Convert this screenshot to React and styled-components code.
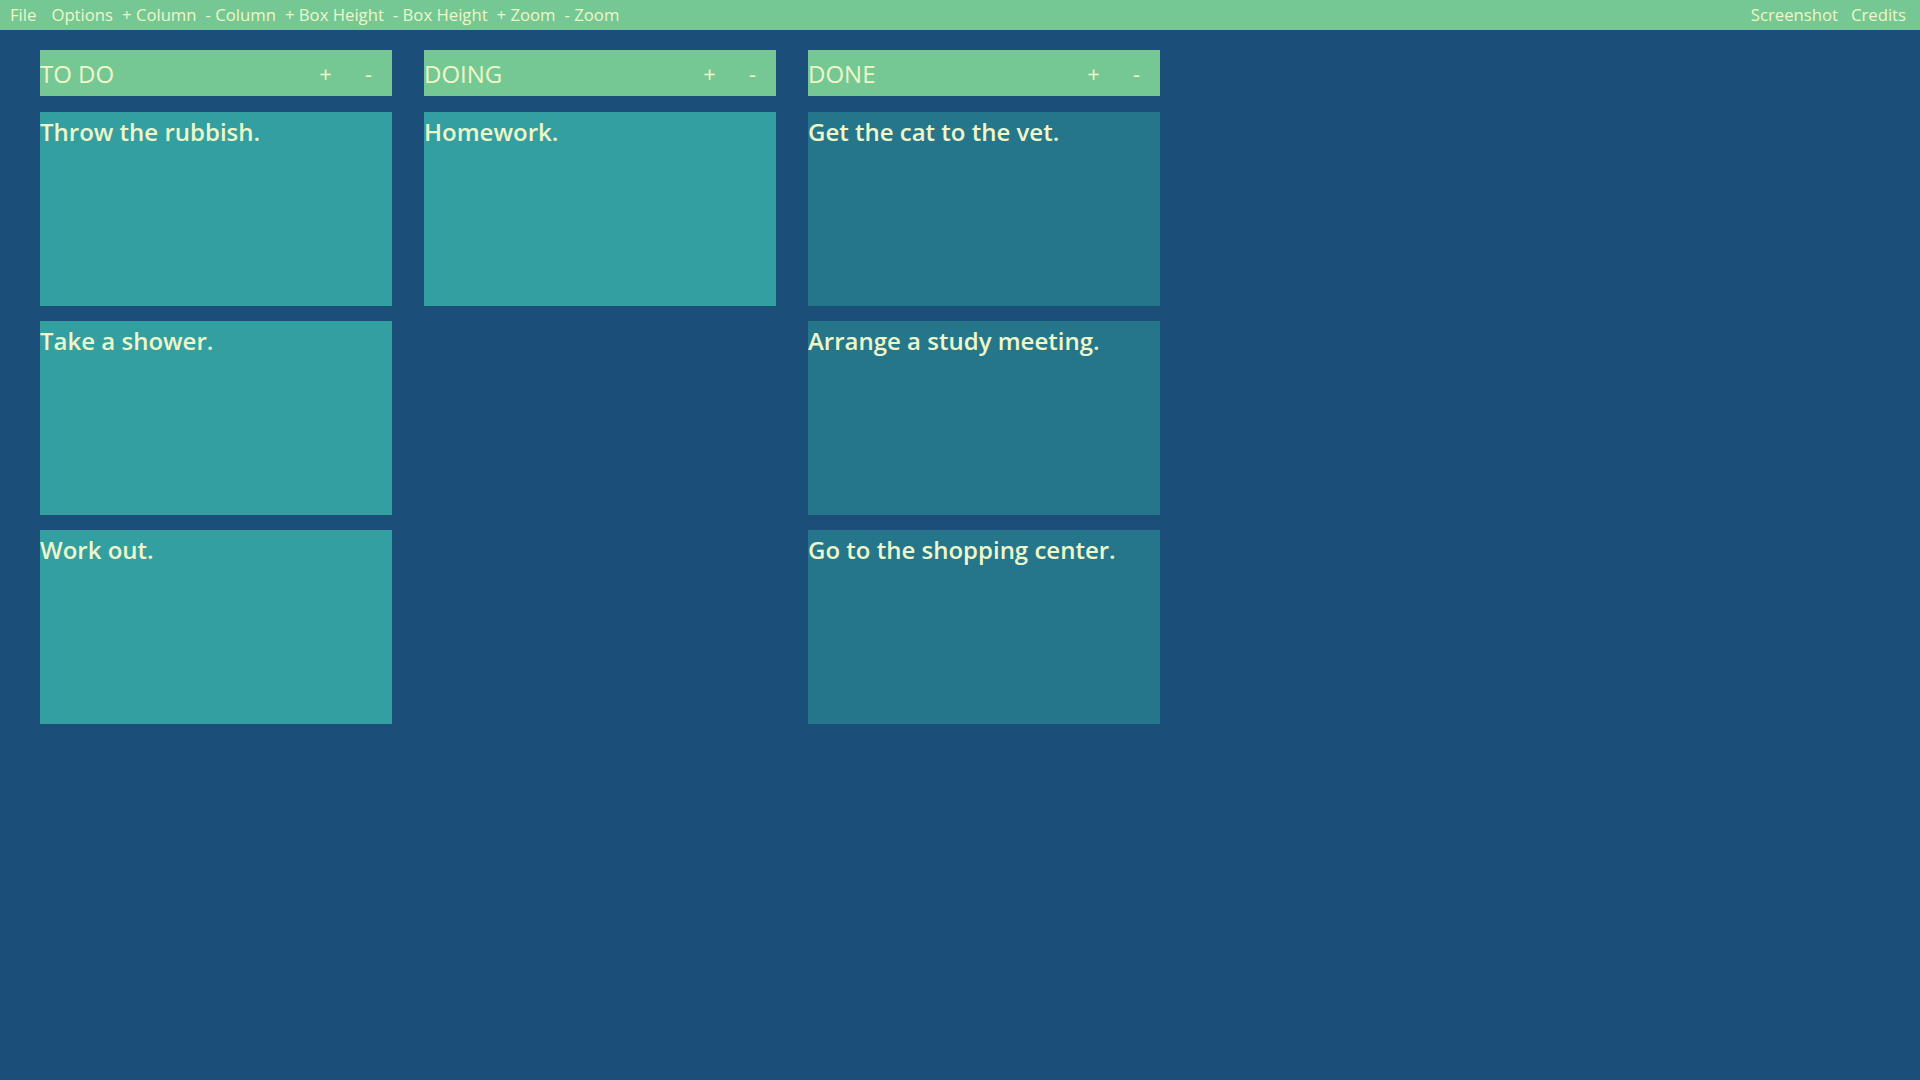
import React from "react";
import styled, { createGlobalStyle } from "styled-components";

const GlobalStyle = createGlobalStyle`
  html, body {
    margin: 0;
    padding: 0;
    background: #1b4e78;
    font-family: "Open Sans", "Noto Sans", sans-serif;
  }
`;

const Page = styled.div`
  min-height: 100vh;
  background: #1b4e78;
`;

const MenuBar = styled.div`
  height: 30px;
  background: #75c893;
  display: flex;
  align-items: center;
  justify-content: space-between;
  padding: 0 14px 0 10px;
`;

const MenuGroup = styled.div`
  display: flex;
  align-items: center;
  gap: ${(p) => p.gap || 10}px;
`;

const MenuItem = styled.span`
  color: #eef7c9;
  font-size: 16.7px;
  line-height: 30px;
  white-space: nowrap;
  cursor: pointer;
`;

const FileItem = styled(MenuItem)`
  margin-right: 6px;
`;

const Board = styled.div`
  display: flex;
  align-items: flex-start;
  gap: 32px;
  padding: 20px 40px;
`;

const Column = styled.div`
  width: 352px;
  display: flex;
  flex-direction: column;
`;

const Header = styled.div`
  height: 46px;
  background: #75c893;
  display: flex;
  align-items: center;
  margin-bottom: 16px;
`;

const Title = styled.span`
  flex: 1;
  color: #eef7c9;
  font-size: 24px;
`;

const HeaderButton = styled.span`
  width: 43px;
  text-align: center;
  color: #eef7c9;
  font-size: 22px;
  cursor: pointer;
`;

const ButtonPad = styled.span`
  width: 2px;
`;

const Cards = styled.div`
  display: flex;
  flex-direction: column;
  gap: 15px;
`;

const Card = styled.div`
  height: 194px;
  box-sizing: border-box;
  background: ${(p) => (p.done ? "#26768b" : "#339fa1")};
  color: #eef7c9;
  font-size: 24px;
  font-weight: 600;
  line-height: 32px;
  padding-top: 4px;
`;

const columns = [
  { title: "TO DO", items: ["Throw the rubbish.", "Take a shower.", "Work out."] },
  { title: "DOING", items: ["Homework."] },
  {
    title: "DONE",
    done: true,
    items: ["Get the cat to the vet.", "Arrange a study meeting.", "Go to the shopping center."],
  },
];

const leftMenu = ["Options", "+ Column", "- Column", "+ Box Height", "- Box Height", "+ Zoom", "- Zoom"];

export default function App() {
  return (
    <Page>
      <GlobalStyle />
      <MenuBar>
        <MenuGroup gap={9}>
          <FileItem>File</FileItem>
          {leftMenu.map((m) => (
            <MenuItem key={m}>{m}</MenuItem>
          ))}
        </MenuGroup>
        <MenuGroup gap={13}>
          <MenuItem>Screenshot</MenuItem>
          <MenuItem>Credits</MenuItem>
        </MenuGroup>
      </MenuBar>
      <Board>
        {columns.map((col) => (
          <Column key={col.title}>
            <Header>
              <Title>{col.title}</Title>
              <HeaderButton>+</HeaderButton>
              <HeaderButton>-</HeaderButton>
              <ButtonPad />
            </Header>
            <Cards>
              {col.items.map((item) => (
                <Card key={item} done={col.done}>
                  {item}
                </Card>
              ))}
            </Cards>
          </Column>
        ))}
      </Board>
    </Page>
  );
}
